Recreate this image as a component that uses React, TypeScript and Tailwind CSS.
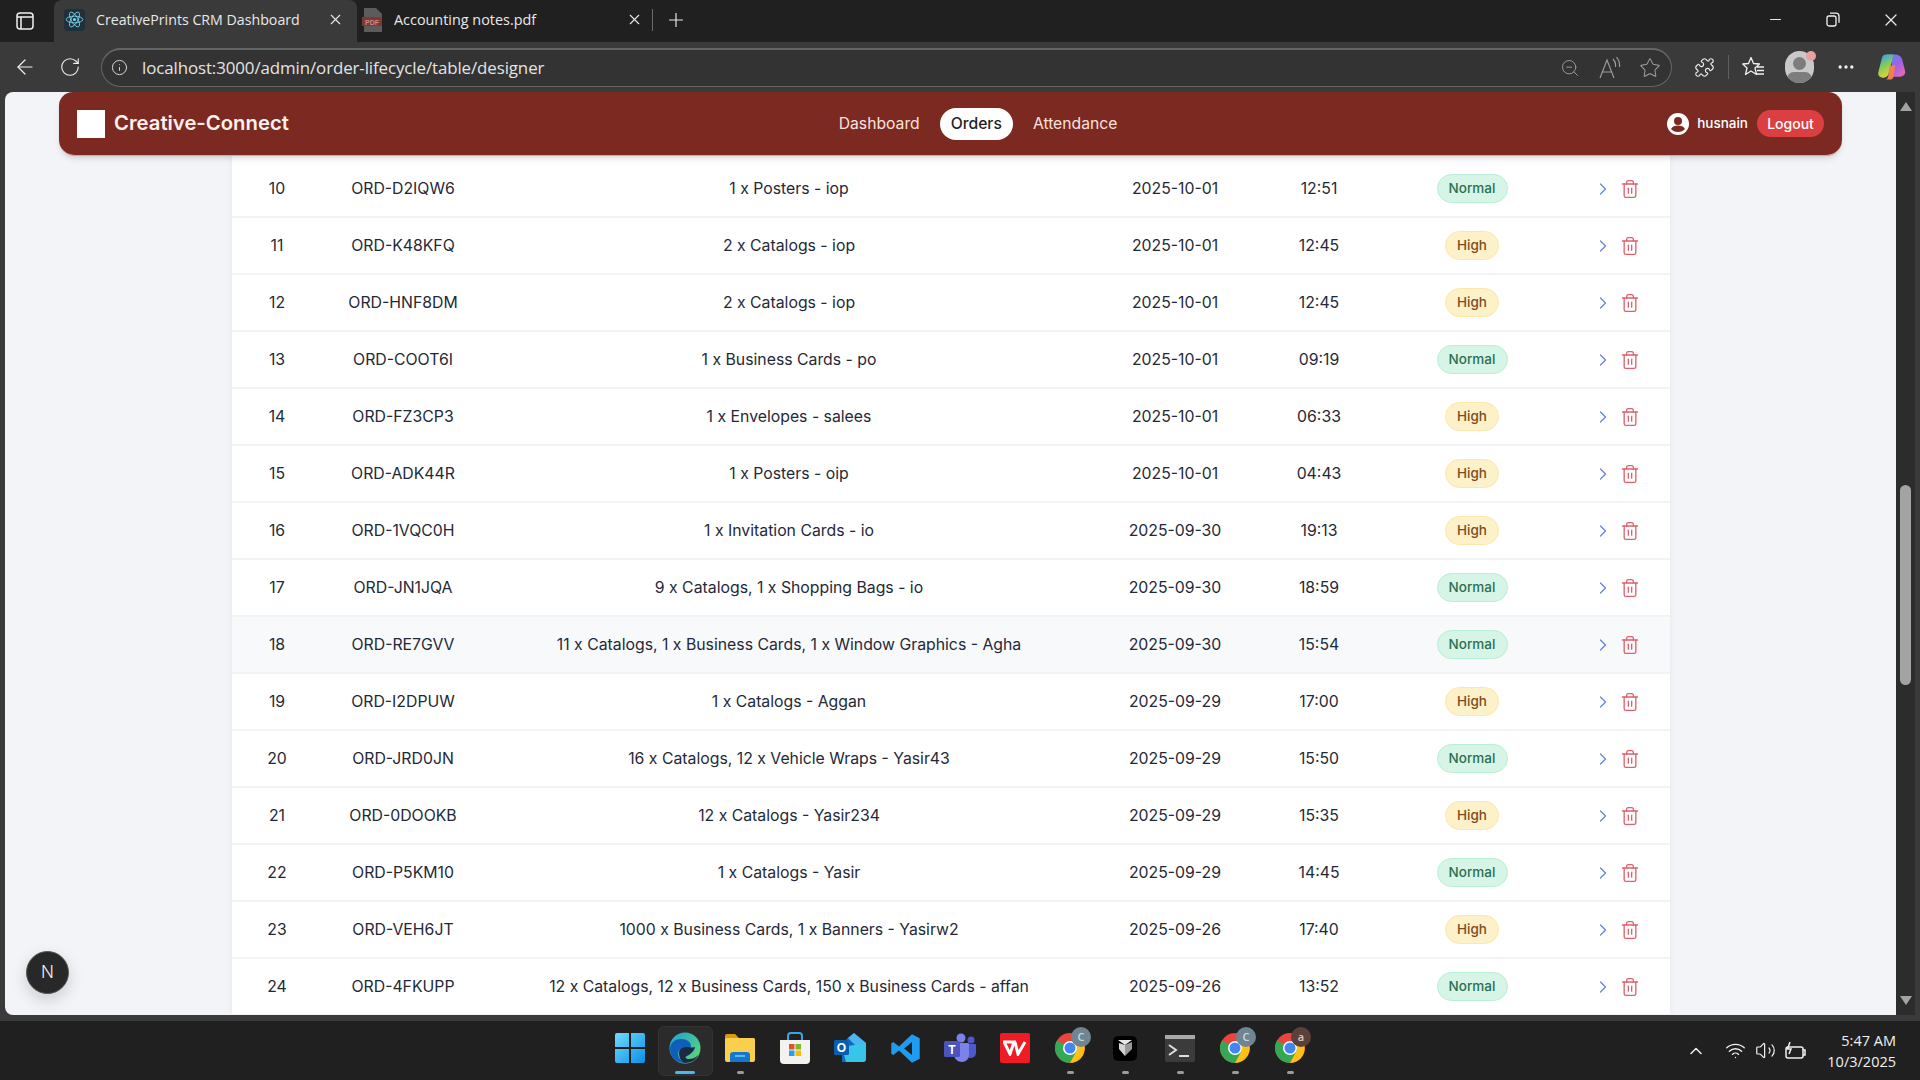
import React from 'react'
import {
  ArrowLeft,
  ChevronRight,
  ChevronUp,
  Ellipsis,
  Info,
  Minus,
  Plus,
  Puzzle,
  RotateCw,
  Star,
  Trash2,
  Volume2,
  Wifi,
  X,
  ZoomOut,
} from 'lucide-react'

interface Order {
  no: number
  id: string
  items: string
  date: string
  time: string
  priority: 'Normal' | 'High'
  hover?: boolean
}

const orders: Order[] = [
  { no: 10, id: 'ORD-D2IQW6', items: '1 x Posters - iop', date: '2025-10-01', time: '12:51', priority: 'Normal' },
  { no: 11, id: 'ORD-K48KFQ', items: '2 x Catalogs - iop', date: '2025-10-01', time: '12:45', priority: 'High' },
  { no: 12, id: 'ORD-HNF8DM', items: '2 x Catalogs - iop', date: '2025-10-01', time: '12:45', priority: 'High' },
  { no: 13, id: 'ORD-COOT6I', items: '1 x Business Cards - po', date: '2025-10-01', time: '09:19', priority: 'Normal' },
  { no: 14, id: 'ORD-FZ3CP3', items: '1 x Envelopes - salees', date: '2025-10-01', time: '06:33', priority: 'High' },
  { no: 15, id: 'ORD-ADK44R', items: '1 x Posters - oip', date: '2025-10-01', time: '04:43', priority: 'High' },
  { no: 16, id: 'ORD-1VQC0H', items: '1 x Invitation Cards - io', date: '2025-09-30', time: '19:13', priority: 'High' },
  { no: 17, id: 'ORD-JN1JQA', items: '9 x Catalogs, 1 x Shopping Bags - io', date: '2025-09-30', time: '18:59', priority: 'Normal' },
  { no: 18, id: 'ORD-RE7GVV', items: '11 x Catalogs, 1 x Business Cards, 1 x Window Graphics - Agha', date: '2025-09-30', time: '15:54', priority: 'Normal', hover: true },
  { no: 19, id: 'ORD-I2DPUW', items: '1 x Catalogs - Aggan', date: '2025-09-29', time: '17:00', priority: 'High' },
  { no: 20, id: 'ORD-JRD0JN', items: '16 x Catalogs, 12 x Vehicle Wraps - Yasir43', date: '2025-09-29', time: '15:50', priority: 'Normal' },
  { no: 21, id: 'ORD-0DOOKB', items: '12 x Catalogs - Yasir234', date: '2025-09-29', time: '15:35', priority: 'High' },
  { no: 22, id: 'ORD-P5KM10', items: '1 x Catalogs - Yasir', date: '2025-09-29', time: '14:45', priority: 'Normal' },
  { no: 23, id: 'ORD-VEH6JT', items: '1000 x Business Cards, 1 x Banners - Yasirw2', date: '2025-09-26', time: '17:40', priority: 'High' },
  { no: 24, id: 'ORD-4FKUPP', items: '12 x Catalogs, 12 x Business Cards, 150 x Business Cards - affan', date: '2025-09-26', time: '13:52', priority: 'Normal' },
]

const ReactIcon = () => (
  <div className="flex h-[22px] w-[21px] items-center justify-center rounded-sm bg-[#20303a]">
    <svg width="19" height="19" viewBox="-12 -12 24 24" fill="none" stroke="#7fd4ec" strokeWidth="1.1">
      <circle r="2" fill="#7fd4ec" stroke="none" />
      <ellipse rx="10.5" ry="4.2" />
      <ellipse rx="10.5" ry="4.2" transform="rotate(60)" />
      <ellipse rx="10.5" ry="4.2" transform="rotate(120)" />
    </svg>
  </div>
)

const PdfIcon = () => (
  <svg width="20" height="24" viewBox="0 0 20 24">
    <path d="M2 0h12l6 6v18H2z" fill="#5e5c5b" />
    <rect x="0" y="9" width="20" height="9" fill="#7a3a36" />
    <text x="10" y="16.5" textAnchor="middle" fontSize="7" fontWeight="700" fill="#c98a84" fontFamily="Liberation Sans, sans-serif">
      PDF
    </text>
  </svg>
)

const TabBar = () => (
  <div className="flex h-[42px] shrink-0 items-end bg-[#202020] text-[#e8e8e8]">
    <div className="flex h-[42px] w-[54px] items-center justify-center bg-[#202020]">
      <svg width="18" height="18" viewBox="0 0 18 18" fill="none" stroke="#f0f0f0" strokeWidth="1.5" className="ml-[-4px]">
        <rect x="1" y="1" width="16" height="16" rx="3" />
        <path d="M1 5h16M5 5v12" />
      </svg>
    </div>
    <div className="flex h-[42px] w-[303px] items-center rounded-t-lg bg-[#3a3a3a] pb-[3px] pl-[10px] pr-[13px]">
      <ReactIcon />
      <span className="ml-[11px] flex-1 truncate text-[14.2px]">CreativePrints CRM Dashboard</span>
      <X size={17} strokeWidth={1.6} />
    </div>
    <div className="flex h-[42px] w-[295px] items-center pb-[3px] pl-[5px] pr-[9px]">
      <PdfIcon />
      <span className="ml-[12px] flex-1 truncate text-[14.4px]">Accounting notes.pdf</span>
      <X size={17} strokeWidth={1.6} />
    </div>
    <div className="mb-[3px] h-[22px] w-px self-center bg-[#6a6a6a]" />
    <div className="flex h-[42px] w-[46px] items-center justify-center pb-[3px]">
      <Plus size={22} strokeWidth={1.3} />
    </div>
    <div className="flex-1" />
    <div className="flex h-[42px] items-center pb-[3px] pr-[2px]">
      <div className="flex w-[53px] justify-center">
        <Minus size={17} strokeWidth={1.5} />
      </div>
      <div className="flex w-[62px] justify-center">
        <svg width="14" height="15" viewBox="0 0 14 15" fill="none" stroke="#f0f0f0" strokeWidth="1.3">
          <rect x="1" y="4" width="9" height="10" rx="2" />
          <path d="M4 1.2h6a3 3 0 0 1 3 3v6.5" />
        </svg>
      </div>
      <div className="flex w-[54px] justify-center">
        <X size={20} strokeWidth={1.5} />
      </div>
    </div>
  </div>
)

const CopilotIcon = () => (
  <svg width="29" height="30" viewBox="0 0 30 30">
    <defs>
      <linearGradient id="cpa" x1="0.2" y1="0" x2="0.6" y2="1">
        <stop offset="0" stopColor="#2f9ff0" />
        <stop offset="0.55" stopColor="#8fd04c" />
        <stop offset="1" stopColor="#f0d040" />
      </linearGradient>
      <linearGradient id="cpb" x1="0" y1="0" x2="0.8" y2="1">
        <stop offset="0" stopColor="#4f8cf0" />
        <stop offset="0.55" stopColor="#a060e8" />
        <stop offset="1" stopColor="#e86ab0" />
      </linearGradient>
    </defs>
    <path d="M10 2h9c3 0 6 2 7 5l3 12c.8 3.500-1.500 6-5 6h-8l-1-15z" fill="url(#cpb)" />
    <path d="M9 2h8l-5 20c-.7 2.500-2.500 4-5 4H6c-3.500 0-5.500-2.500-4.500-6L5 6c.6-2.500 2-4 4-4z" fill="url(#cpa)" />
    <path d="M13 14l6-1-2 12c-.4 2-2 3-4 3H8c2 0 3-1 3.500-3z" fill="#f0804f" />
  </svg>
)

const ReadAloudIcon = () => (
  <svg width="24" height="22" viewBox="0 0 24 22" fill="none" stroke="#a0a0a0" strokeWidth="1.1">
    <path d="M1 21 8 3l7 18M3.500 15h9" />
    <path d="M14 2c2 2 3 4.500 2.500 8M17.500 0c2.500 3 3.500 6 3 10" />
  </svg>
)

const FavoritesIcon = () => (
  <svg width="24" height="22" viewBox="0 0 24 22" fill="none" stroke="#f0f0f0" strokeWidth="1.3">
    <path d="M9 1.500l2.500 6 6 .5-4.500 4 1.500 6.500-5.500-3.500-5.500 3.500L5 12 .8 8l5.700-.5z" strokeLinejoin="round" />
    <path d="M15 11h7M15 14.500h7M15 18h7" />
  </svg>
)

const Toolbar = () => (
  <div className="flex h-[50px] shrink-0 items-center bg-[#3a3a3a] text-[#f0f0f0]">
    <div className="flex w-[50px] justify-center">
      <ArrowLeft size={24} strokeWidth={1.2} />
    </div>
    <div className="flex w-[40px] justify-center">
      <RotateCw size={22} strokeWidth={1.2} />
    </div>
    <div className="ml-[11px] flex h-[39px] w-[1571px] items-center rounded-full border-[1.5px] border-t-[2px] border-[#646665] bg-[#333333] pl-[9px] pr-[9px]">
      <Info size={17} strokeWidth={1.4} color="#d8d8d8" />
      <span className="ml-[14px] flex-1 text-[16.9px] tracking-[-0.1px] text-[#e4e4e4]">
        localhost:3000/admin/order-lifecycle/table/designer
      </span>
      <ZoomOut size={20} strokeWidth={1.1} color="#a0a0a0" className="mr-[19px]" />
      <div className="mr-[16px]">
        <ReadAloudIcon />
      </div>
      <Star size={22} strokeWidth={1.1} color="#a0a0a0" className="mr-[1px]" />
    </div>
    <div className="ml-[21px] flex w-[22px] justify-center">
      <Puzzle size={21} strokeWidth={1.3} />
    </div>
    <div className="ml-[13px] h-[24px] w-px bg-[#606060]" />
    <div className="ml-[13px] flex w-[24px] items-center">
      <FavoritesIcon />
    </div>
    <div className="relative ml-[19px] h-[32px] w-[29px]">
      <div className="h-full w-full overflow-hidden rounded-full bg-[#c9c9c9]">
        <div className="mx-auto mt-[6px] h-[13px] w-[13px] rounded-full bg-[#7d7d7d]" />
        <div className="mx-auto mt-[2px] h-[14px] w-[25px] rounded-full bg-[#7d7d7d]" />
      </div>
      <span className="absolute right-[-2px] top-0 h-[10px] w-[10px] rounded-full bg-[#e8a0a0]" />
    </div>
    <div className="ml-[20px] flex w-[24px] justify-center">
      <Ellipsis size={20} strokeWidth={2} />
    </div>
    <div className="ml-[19px]">
      <CopilotIcon />
    </div>
  </div>
)

const UserIcon = () => (
  <svg width="22" height="22" viewBox="0 0 22 22">
    <circle cx="11" cy="11" r="11" fill="#fff" />
    <circle cx="11" cy="8" r="4" fill="#7c2921" />
    <path d="M4 16c1.500-3 4-3.500 7-3.500s5.500.5 7 3.500c-1.600 2-4 3-7 3s-5.400-1-7-3z" fill="#7c2921" />
  </svg>
)

const Navbar = () => (
  <div className="absolute left-[54px] top-0 z-10 flex h-[64px] w-[1783px] items-center justify-between rounded-b-[16px] rounded-t-[14px] border-b border-[#d9a79f] bg-[#7c2921] pl-[18px] pr-[18px] shadow-md">
    <div className="flex items-center">
      <div className="h-[28px] w-[28px] bg-white" />
      <span className="ml-[9px] text-[20.3px] font-semibold text-[#fdf1ee]">Creative-Connect</span>
    </div>
    <div className="flex items-center gap-[8px] text-[15.7px]">
      <span className="px-[12px] text-[#fbe3dd]">Dashboard</span>
      <span className="flex h-[32px] items-center rounded-full bg-white px-[11px] font-medium text-[#1f1f1f]">Orders</span>
      <span className="px-[12px] text-[#fbe3dd]">Attendance</span>
    </div>
    <div className="flex items-center">
      <UserIcon />
      <span className="ml-[8px] text-[13.5px] font-medium text-white">husnain</span>
      <span className="ml-[9px] flex h-[27px] w-[67px] items-center justify-center rounded-full bg-[#dc3f42] text-[14px] font-medium text-white">
        Logout
      </span>
    </div>
  </div>
)

const PriorityBadge: React.FC<{ priority: Order['priority'] }> = ({ priority }) => {
  if (priority === 'Normal') {
    return (
      <span className="flex h-[29px] w-[71px] items-center justify-center rounded-full border border-[#b9efd6] bg-[#d6f5e6] text-[13.5px] font-medium text-[#2c6e52]">
        Normal
      </span>
    )
  }
  return (
    <span className="flex h-[29px] w-[54px] items-center justify-center rounded-full border border-[#fbe8aa] bg-[#fcf1c8] text-[13.5px] font-medium text-[#7f4a1c]">
      High
    </span>
  )
}

const OrderRow: React.FC<{ order: Order }> = ({ order }) => (
  <div
    className={`grid h-[57px] grid-cols-[90px_162px_610px_162px_126px_180px_108px] items-center border-b-2 border-[#f1f3f5] text-center text-[15.8px] text-[#1f2937] ${
      order.hover ? 'bg-[#f8f9fb]' : 'bg-white'
    }`}
  >
    <span>{order.no}</span>
    <span>{order.id}</span>
    <span>{order.items}</span>
    <span>{order.date}</span>
    <span>{order.time}</span>
    <div className="flex justify-center">
      <PriorityBadge priority={order.priority} />
    </div>
    <div className="flex items-center pl-[31px]">
      <ChevronRight size={20} strokeWidth={1.5} color="#5f86e0" />
      <Trash2 size={20} strokeWidth={1.6} color="#e0606e" className="ml-[7px]" />
    </div>
  </div>
)

const Scrollbar = () => (
  <div className="flex w-[19px] shrink-0 flex-col items-center bg-[#2c2c2c] py-[10px]">
    <div className="h-0 w-0 border-x-[6px] border-b-[9px] border-x-transparent border-b-[#a3a3a3]" />
    <div className="mt-[374px] h-[200px] w-[11px] rounded-full bg-[#a3a3a3]" />
    <div className="flex-1" />
    <div className="h-0 w-0 border-x-[6px] border-t-[9px] border-x-transparent border-t-[#a3a3a3]" />
  </div>
)

const Content = () => (
  <div className="flex min-h-0 flex-1 pl-[5px] pr-[5px]">
    <div className="relative flex-1 overflow-hidden rounded-bl-lg rounded-tl-lg bg-[#f2f4f7]">
      <Navbar />
      <div className="ml-[227px] h-full w-[1438px] bg-white pt-[69px] shadow-[0_0_6px_rgba(0,0,0,0.06)]">
        {orders.map((order) => (
          <OrderRow order={order} key={order.no} />
        ))}
      </div>
      <div className="absolute bottom-[21px] left-[21px] flex h-[43px] w-[43px] items-center justify-center rounded-full border border-[#555] bg-[#282828] text-[17px] font-light text-[#eee] shadow-[0_6px_16px_rgba(0,0,0,0.16)]">
        N
      </div>
    </div>
    <Scrollbar />
  </div>
)

const WinIcon = () => (
  <svg width="30" height="30" viewBox="0 0 30 30">
    <defs>
      <linearGradient id="win" x1="0" y1="0" x2="1" y2="1">
        <stop offset="0" stopColor="#6fdcfb" />
        <stop offset="1" stopColor="#0a8fe8" />
      </linearGradient>
    </defs>
    <path d="M0 2a2 2 0 0 1 2-2h12v14H0zM16 0h12a2 2 0 0 1 2 2v12H16zM0 16h14v14H2a2 2 0 0 1-2-2zM16 16h14v12a2 2 0 0 1-2 2H16z" fill="url(#win)" />
  </svg>
)

const EdgeIcon = () => (
  <svg width="32" height="32" viewBox="0 0 32 32">
    <defs>
      <linearGradient id="edge" x1="0" y1="0" x2="1" y2="1">
        <stop offset="0" stopColor="#1f9fd8" />
        <stop offset="1" stopColor="#62de6c" />
      </linearGradient>
    </defs>
    <circle cx="16" cy="16" r="15.500" fill="url(#edge)" />
    <path d="M1 17C1 10 7 7 12 7c6 0 10 3 10 7 0 1-1 2-4 2-4 0-9 1-9 6 0 4 4 8 8 9C9 32 1 26 1 17z" fill="#0f5fb8" />
    <path d="M10 21c0-4 4-6 8-6 3 0 6 1 8 0-1 5-6 8-8 9-3 1-1 3 2 3 3 0 6-1 9-4-2 5-7 8-13 8-4-1-6-6-6-10z" fill="#1b2a44" />
  </svg>
)

const FolderIcon = () => (
  <svg width="32" height="30" viewBox="0 0 32 30">
    <path d="M1 3a2 2 0 0 1 2-2h8l4 4h14a2 2 0 0 1 2 2v4H1z" fill="#d99a14" />
    <rect x="1" y="5" width="30" height="24" rx="2" fill="#fbcf4e" />
    <path d="M6 29v-7a3 3 0 0 1 3-3h14a3 3 0 0 1 3 3v7z" fill="#1478cf" />
    <rect x="11" y="22" width="10" height="2" fill="#5fb6ee" />
  </svg>
)

const StoreIcon = () => (
  <svg width="30" height="32" viewBox="0 0 30 32">
    <path d="M8 8V4a3 3 0 0 1 3-3h8a3 3 0 0 1 3 3v4" fill="none" stroke="#35a7e8" strokeWidth="2" />
    <path d="M0 8h30v20a4 4 0 0 1-4 4H4a4 4 0 0 1-4-4z" fill="#f4f2ee" />
    <rect x="9" y="12" width="5.500" height="5.500" fill="#e4512c" />
    <rect x="15.500" y="12" width="5.500" height="5.500" fill="#7bb82a" />
    <rect x="9" y="18.500" width="5.500" height="5.500" fill="#1fa3e8" />
    <rect x="15.500" y="18.500" width="5.500" height="5.500" fill="#f9b90d" />
  </svg>
)

const OutlookIcon = () => (
  <svg width="32" height="30" viewBox="0 0 32 30">
    <path d="M8 10 20 0l12 10v16a3 3 0 0 1-3 3H8z" fill="#0f6cbd" />
    <path d="M14 5l6-5 12 10-8 5z" fill="#4fb4ee" />
    <path d="M8 14l24-4v16a3 3 0 0 1-3 3H12z" fill="#37c6e8" />
    <rect x="0" y="7" width="15" height="15" rx="1.500" fill="#0a5eb0" />
    <text x="7.500" y="19" textAnchor="middle" fontSize="12" fontWeight="700" fill="#fff" fontFamily="Liberation Sans, sans-serif">
      O
    </text>
  </svg>
)

const VsCodeIcon = () => (
  <svg width="31" height="31" viewBox="0 0 24 24">
    <path d="M17 1 23 4v16l-6 3-10-9.500L2.500 17 1 16v-8l1.500-1L7 10.500zM17 7l-6 5 6 5z" fill="#1f9cf0" />
  </svg>
)

const TeamsIcon = () => (
  <svg width="32" height="30" viewBox="0 0 32 30">
    <circle cx="17" cy="5" r="4.500" fill="#7b83eb" />
    <circle cx="27" cy="7" r="3.500" fill="#5059c9" />
    <path d="M22 11h9a1 1 0 0 1 1 1v8a5 5 0 0 1-5 5c-3 0-5-2-5-5z" fill="#5059c9" />
    <path d="M9 10h15a1 1 0 0 1 1 1v11a7 7 0 0 1-7 7c-4 0-7-3-8-6z" fill="#7b83eb" />
    <rect x="0" y="8" width="16" height="16" rx="1.500" fill="#4b53bc" />
    <text x="8" y="20.500" textAnchor="middle" fontSize="12" fontWeight="700" fill="#fff" fontFamily="Liberation Sans, sans-serif">
      T
    </text>
  </svg>
)

const WpsIcon = () => (
  <div className="flex h-[30px] w-[30px] items-center justify-center rounded-[2px] bg-[#f01c25]">
    <svg width="24" height="16" viewBox="0 0 24 16" fill="none" stroke="#fff" strokeWidth="3">
      <path d="M1 2h10l-4 12zM12 2l3 12 7-12" />
    </svg>
  </div>
)

const ChromeIcon: React.FC<{ badge: string; badgeClass: string }> = ({ badge, badgeClass }) => (
  <div className="relative h-[30px] w-[30px]">
    <svg width="30" height="30" viewBox="0 0 30 30">
      <circle cx="15" cy="15" r="15" fill="#e8453c" />
      <path d="M15 15 2 7.500A15 15 0 0 0 15 30l7.500-13z" fill="#34a853" />
      <path d="M15 8h13a15 15 0 0 1-13 22l7-13z" fill="#fbc116" />
      <circle cx="15" cy="15" r="7" fill="#fff" />
      <circle cx="15" cy="15" r="5.500" fill="#4285f4" />
    </svg>
    <span className={`absolute -right-[6px] -top-[6px] flex h-[20px] w-[20px] items-center justify-center rounded-full text-[11px] font-semibold ${badgeClass}`}>
      {badge}
    </span>
  </div>
)

const AppCubeIcon = () => (
  <div className="flex h-[25px] w-[24px] items-center justify-center rounded-[5px] bg-black">
    <svg width="16" height="18" viewBox="0 0 16 18">
      <path d="M1 1h14L8 6z" fill="#e8e8e8" />
      <path d="M8 6l7-3v7l-7 7z" fill="#9a9a9a" />
      <path d="M8 6 2 4v6l6 7z" fill="#d4d4d4" />
    </svg>
  </div>
)

const TerminalIcon = () => (
  <div className="h-[27px] w-[30px] rounded-[2px] bg-[#3b3b3b]">
    <div className="h-[4px] w-full bg-[#a8a8a8]" />
    <svg width="30" height="23" viewBox="0 0 30 23" fill="none" stroke="#dcdcdc" strokeWidth="2">
      <path d="M4 6l7 5-7 5M14 17h10" />
    </svg>
  </div>
)

const taskbarApps: { key: string; icon: React.ReactNode; dot: 'none' | 'open' | 'active' }[] = [
  { key: 'start', icon: <WinIcon />, dot: 'none' },
  { key: 'edge', icon: <EdgeIcon />, dot: 'active' },
  { key: 'files', icon: <FolderIcon />, dot: 'open' },
  { key: 'store', icon: <StoreIcon />, dot: 'none' },
  { key: 'outlook', icon: <OutlookIcon />, dot: 'none' },
  { key: 'vscode', icon: <VsCodeIcon />, dot: 'none' },
  { key: 'teams', icon: <TeamsIcon />, dot: 'none' },
  { key: 'wps', icon: <WpsIcon />, dot: 'none' },
  { key: 'chrome1', icon: <ChromeIcon badge="C" badgeClass="bg-[#6f8592] text-[#cfd8dc]" />, dot: 'open' },
  { key: 'cube', icon: <AppCubeIcon />, dot: 'open' },
  { key: 'terminal', icon: <TerminalIcon />, dot: 'open' },
  { key: 'chrome2', icon: <ChromeIcon badge="C" badgeClass="bg-[#6f8592] text-[#cfd8dc]" />, dot: 'open' },
  { key: 'chrome3', icon: <ChromeIcon badge="a" badgeClass="bg-[#5d4037] text-[#d7ccc8]" />, dot: 'open' },
]

const Taskbar = () => (
  <div className="relative mt-[6px] flex h-[59px] shrink-0 items-center justify-center bg-[#202020] text-[#f0f0f0]">
    <div className="flex h-full items-center">
      {taskbarApps.map((app) => (
        <div
          key={app.key}
          className={`relative flex h-[50px] w-[55px] items-center justify-center rounded-md pb-[5px] ${
            app.dot === 'active' ? 'border border-[#333] bg-[#2b2b2b]' : ''
          }`}
        >
          {app.icon}
          {app.dot === 'open' && <span className="absolute bottom-[2px] h-[3px] w-[7px] rounded-full bg-[#9b9b9b]" />}
          {app.dot === 'active' && <span className="absolute bottom-[1px] h-[3px] w-[20px] rounded-full bg-[#4cb8f0]" />}
        </div>
      ))}
    </div>
    <div className="absolute right-[24px] top-0 flex h-full items-center">
      <ChevronUp size={20} strokeWidth={1.8} />
      <Wifi size={21} strokeWidth={1.6} className="ml-[19px]" />
      <Volume2 size={21} strokeWidth={1.4} className="ml-[9px]" />
      <svg width="22" height="20" viewBox="0 0 22 20" fill="none" stroke="#f0f0f0" strokeWidth="1.5" className="ml-[9px]">
        <rect x="1" y="6" width="17" height="11" rx="2" />
        <path d="M18 9h2v5h-2M5 1 2.500 8H6l-2 5" />
      </svg>
      <div className="ml-[20px] text-right text-[14.500px] leading-[21px]">
        <div>5:47 AM</div>
        <div>10/3/2025</div>
      </div>
    </div>
  </div>
)

const App: React.FC = () => {
  return (
    <div className="flex h-screen w-full flex-col overflow-hidden bg-[#3a3a3a] font-['Inter',sans-serif]">
      <div className="flex shrink-0 flex-col font-['Open_Sans',sans-serif]">
        <TabBar />
        <Toolbar />
      </div>
      <Content />
      <div className="font-['Open_Sans',sans-serif]">
        <Taskbar />
      </div>
    </div>
  )
}

export default App
